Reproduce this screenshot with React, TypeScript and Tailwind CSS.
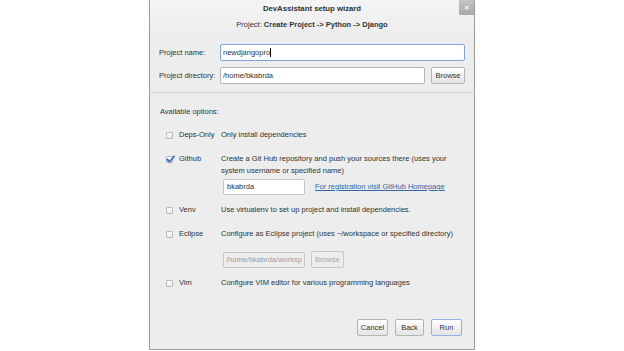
import React from "react";

const font = { fontFamily: '"Liberation Sans", Arial, sans-serif' };

function Check({ checked }: { checked?: boolean }) {
  return (
    <div className="relative w-[7px] h-[7px] border border-[#b8b8b8] bg-gradient-to-b from-white to-[#ececec] rounded-[1px]">
      {checked && (
        <svg className="absolute -left-[1px] -top-[2px]" width="9" height="9" viewBox="0 0 10 10">
          <path d="M1.5 5 L4 7.5 L9 1.5" fill="none" stroke="#3a6fc7" strokeWidth="2" strokeLinecap="round" strokeLinejoin="round" />
        </svg>
      )}
    </div>
  );
}

function Btn({ children, w, focus, disabled }: { children: React.ReactNode; w: string; focus?: boolean; disabled?: boolean }) {
  return (
    <div
      className={`${w} h-[17px] flex items-center justify-center rounded-[2px] border ${
        disabled
          ? "border-[#c8c8c8] text-[#a8a8a8] bg-[#ededed]"
          : focus
          ? "border-[#8eb4e6] bg-gradient-to-b from-white to-[#e4e4e4] text-[#2e3436]"
          : "border-[#b4b4b4] bg-gradient-to-b from-white to-[#e4e4e4] text-[#2e3436]"
      }`}
    >
      {children}
    </div>
  );
}

function Option({
  label,
  desc,
  checked,
  h,
  children,
}: {
  label: string;
  desc: React.ReactNode;
  checked?: boolean;
  h: string;
  children?: React.ReactNode;
}) {
  return (
    <div className={`flex ${h}`}>
      <div className="w-[14px] pt-[3px] pl-[1px]">
        <Check checked={checked} />
      </div>
      <div className="w-[42px] leading-[12px] whitespace-nowrap">{label}</div>
      <div className="flex-1 leading-[12px]">
        {desc}
        {children}
      </div>
    </div>
  );
}

export default function App() {
  return (
    <div className="w-[624px] h-[351px] bg-white flex justify-center text-[7.5px] text-[#2e3436]" style={font}>
      <div className="w-[326px] h-[350px] border-x border-b border-[#9a9a9a] bg-[#ededed] flex flex-col relative">
        {/* Close button */}
        <div className="absolute right-0 top-0 w-[15px] h-[15px] bg-gradient-to-b from-[#c4c4c4] to-[#a9a9a9] flex items-center justify-center text-white text-[8px] font-bold">
          ×
        </div>

        {/* Header */}
        <div className="h-[36px] bg-gradient-to-b from-[#f4f4f4] to-[#ededed] flex flex-col items-center pt-[3px]">
          <div className="font-bold text-[7.75px] leading-[11px]">DevAssistant setup wizard</div>
          <div className="leading-[11px] mt-[5px]">
            Project: <span className="font-bold">Create Project -&gt; Python -&gt; Django</span>
          </div>
        </div>

        {/* Project fields */}
        <div className="px-[9px] pt-[8px] flex flex-col gap-[6px]">
          <div className="flex items-center h-[17px]">
            <div className="w-[61px] whitespace-nowrap">Project name:</div>
            <div className="flex-1 h-[17px] border border-[#7ea6de] bg-white rounded-[2px] flex items-center pl-[2px]">
              newdjangopro<span className="w-[1px] h-[9px] bg-black" />
            </div>
          </div>
          <div className="flex items-center h-[17px]">
            <div className="w-[61px] whitespace-nowrap">Project directory:</div>
            <div className="flex-1 h-[17px] border border-[#b4b4b4] bg-white rounded-[2px] flex items-center pl-[2px]">
              /home/bkabrda
            </div>
            <div className="ml-[6px]">
              <Btn w="w-[34px]">Browse</Btn>
            </div>
          </div>
        </div>

        <div className="mt-[8px] mx-[1px] h-px bg-[#d0d0d0]" />

        {/* Options */}
        <div className="px-[10px] pt-[13px]">
          <div className="leading-[12px]">Available options:</div>
          <div className="pl-[5px] mt-[11px]">
            <Option label="Deps-Only" desc="Only install dependencies" h="h-[24px]" />
            <Option
              label="Github"
              checked
              h="h-[51px]"
              desc={
                <>
                  Create a Git Hub repository and push your sources there (uses your
                  <br />
                  system username or specified name)
                </>
              }
            >
              <div className="flex items-center mt-[2px] ml-[2px]">
                <div className="w-[82px] h-[16px] border border-[#c4c4c4] bg-white rounded-[2px] flex items-center pl-[3px]">
                  bkabrda
                </div>
                <span className="ml-[10px] text-[#3465a4] underline">For registration visit GitHub Homepage</span>
              </div>
            </Option>
            <Option label="Venv" desc="Use virtualenv to set up project and install dependencies." h="h-[24px]" />
            <Option label="Eclipse" desc="Configure as Eclipse project (uses ~/workspace or specified directory)" h="h-[49px]">
              <div className="flex items-center mt-[11px] ml-[2px]">
                <div className="w-[82px] h-[16px] border border-[#c8c8c8] bg-[#ededed] text-[#a0a0a0] rounded-[2px] flex items-center pl-[2px] overflow-hidden whitespace-nowrap">
                  /home/bkabrda/worksp
                </div>
                <div className="ml-[6px]">
                  <Btn w="w-[33px]" disabled>
                    Browse
                  </Btn>
                </div>
              </div>
            </Option>
            <Option label="Vim" desc="Configure VIM editor for various programming languages" h="h-[20px]" />
          </div>
        </div>

        {/* Buttons */}
        <div className="mt-auto mb-[13px] pr-[12px] flex justify-end gap-[7px]">
          <Btn w="w-[31px]">Cancel</Btn>
          <Btn w="w-[29px]">Back</Btn>
          <Btn w="w-[31px]" focus>
            Run
          </Btn>
        </div>
      </div>
    </div>
  );
}
